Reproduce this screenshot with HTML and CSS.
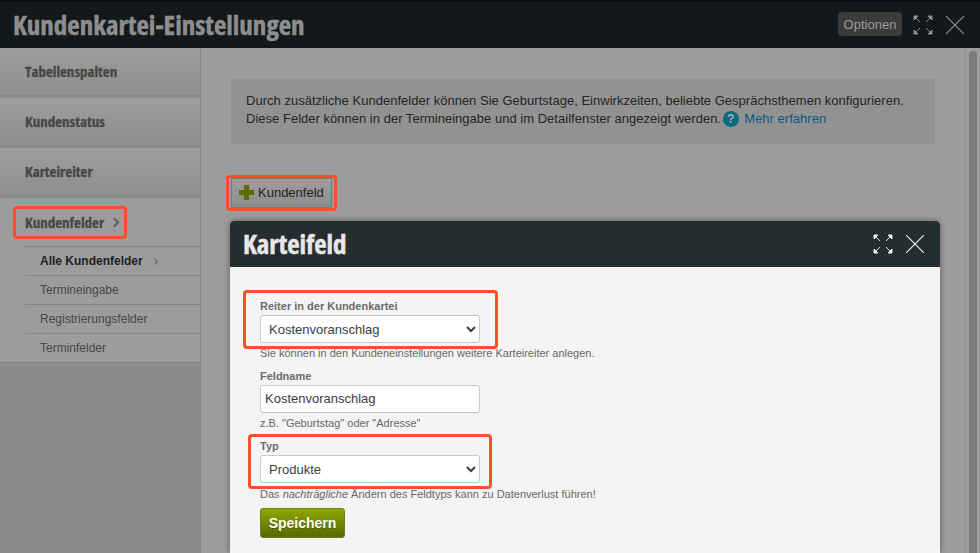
FILE: index.html
```html
<!DOCTYPE html>
<html lang="de">
<head>
    <meta charset="UTF-8">
    <title>Kundenkartei-Einstellungen</title>
    <link rel="stylesheet" href="styles.css">
</head>
<body>
    <div class="window">
        <header class="top-bar">
            <h1>Kundenkartei-Einstellungen</h1>
            <button class="options-btn">Optionen</button>
            <svg class="icon-expand" viewBox="0 0 20 20"><path d="M1 1h4L1 5zM3 3l4 4M19 1h-4l4 4zM17 3l-4 4M1 19h4l-4-4zM3 17l4-4M19 19h-4l4-4zM17 17l-4-4"/></svg>
            <svg class="icon-close" viewBox="0 0 18 18"><path d="M0 0l18 18M18 0L0 18"/></svg>
        </header>

        <div class="main">
            <nav class="sidebar">
                <div class="side-item">Tabellenspalten</div>
                <div class="side-item">Kundenstatus</div>
                <div class="side-item">Karteireiter</div>
                <div class="side-open">
                    <div class="side-title"><span class="mark mark-side">Kundenfelder <i class="chev"></i></span></div>
                    <ul class="sub-list">
                        <li class="active">Alle Kundenfelder <i class="chev small"></i></li>
                        <li>Termineingabe</li>
                        <li>Registrierungsfelder</li>
                        <li>Terminfelder</li>
                    </ul>
                </div>
            </nav>

            <section class="content">
                <div class="notice">
                    Durch zusätzliche Kundenfelder können Sie Geburtstage, Einwirkzeiten, beliebte Gesprächsthemen konfigurieren.<br>
                    Diese Felder können in der Termineingabe und im Detailfenster angezeigt werden.
                    <span class="help">?</span> <a href="#">Mehr erfahren</a>
                </div>

                <div class="mark mark-btn">
                    <button class="add-btn">
                        <svg class="plus" viewBox="0 0 15 15"><path d="M5 0h5v5h5v5h-5v5H5v-5H0V5h5z"/></svg>
                        Kundenfeld
                    </button>
                </div>

                <div class="dialog">
                    <div class="dialog-head">
                        <h2>Karteifeld</h2>
                        <svg class="icon-expand light" viewBox="0 0 20 20"><path d="M1 1h4L1 5zM3 3l4 4M19 1h-4l4 4zM17 3l-4 4M1 19h4l-4-4zM3 17l4-4M19 19h-4l4-4zM17 17l-4-4"/></svg>
                        <svg class="icon-close light" viewBox="0 0 18 18"><path d="M0 0l18 18M18 0L0 18"/></svg>
                    </div>
                    <div class="dialog-body">
                        <div class="mark mark-field">
                            <label>Reiter in der Kundenkartei</label>
                            <select class="field"><option>Kostenvoranschlag</option></select>
                        </div>
                        <p class="hint hint-under">Sie können in den Kundeneinstellungen weitere Karteireiter anlegen.</p>

                        <label class="plain">Feldname</label>
                        <input class="field field-text" type="text" value="Kostenvoranschlag">
                        <p class="hint">z.B. "Geburtstag" oder "Adresse"</p>

                        <div class="mark mark-type">
                            <label>Typ</label>
                            <select class="field"><option>Produkte</option></select>
                        </div>
                        <p class="hint hint-under">Das <em>nachträgliche</em> Ändern des Feldtyps kann zu Datenverlust führen!</p>

                        <button class="save-btn">Speichern</button>
                    </div>
                </div>
            </section>

            <div class="scroll-track"><div class="scroll-thumb"></div></div>
        </div>
    </div>
</body>
</html>
```

FILE: styles.css
```css
html, body {
    margin: 0;
    height: 100%;
    overflow: hidden;
}
body {
    font-family: "Liberation Sans", Arial, sans-serif;
    background: #9c9c9c;
    color: #222;
}
.window {
    height: 553px;
    display: flex;
    flex-direction: column;
}
.top-bar {
    height: 46px;
    background: #13191b;
    border-top: 2px solid #0a0d0e;
    display: flex;
    align-items: center;
    padding: 0 16px 0 13px;
    flex-shrink: 0;
}
.top-bar h1 {
    margin: 0 0 2px;
    flex: 1;
    font-family: "Open Sans", sans-serif;
    font-stretch: condensed;
    font-size: 27px;
    font-weight: 700;
    -webkit-text-stroke: 0.5px #8e8e8e;
    color: #8e8e8e;
}
.options-btn {
    font-family: "Liberation Sans", Arial, sans-serif;
    font-size: 13px;
    color: #9a9a9a;
    background: #3b3b3b;
    border: 0;
    border-radius: 4px;
    width: 64px;
    height: 24px;
    padding: 0;
    margin: 0 11px 2px 0;
}
.icon-expand, .icon-close {
    fill: none;
    stroke: #8f9394;
    stroke-width: 1.1;
    flex-shrink: 0;
}
.icon-expand {
    width: 20px;
    height: 20px;
    margin-right: 13px;
    fill: #8f9394;
    stroke-width: 0.9;
}
.icon-close {
    width: 18px;
    height: 18px;
}
.icon-expand.light, .icon-close.light {
    stroke: #f2f2f2;
}
.icon-expand.light {
    fill: #f2f2f2;
}
.main {
    flex: 1;
    display: flex;
    min-height: 0;
}
.sidebar {
    width: 200px;
    flex-shrink: 0;
    background: #8b8b8b;
    border-right: 1px solid #858585;
}
.side-item {
    height: 48px;
    line-height: 46px;
    padding-left: 25px;
    margin-bottom: 2px;
    font-family: "Open Sans", sans-serif;
    font-stretch: condensed;
    font-size: 15px;
    font-weight: 700;
    -webkit-text-stroke: 0.3px #474747;
    color: #474747;
    background: linear-gradient(#9d9d9d, #8e8e8e);
    border-bottom: 1px solid #858585;
    box-sizing: border-box;
}
.side-open {
    background: #9c9c9c;
    border-bottom: 1px solid #7f7f7f;
}
.side-title {
    height: 48px;
    display: flex;
    align-items: center;
    padding-left: 13px;
    font-family: "Open Sans", sans-serif;
    font-stretch: condensed;
    font-size: 15px;
    font-weight: 700;
    -webkit-text-stroke: 0.3px #474747;
    color: #474747;
}
.mark {
    border: 3px solid #fb4f2a;
    border-radius: 4px;
    box-sizing: border-box;
    position: relative;
}
.mark-side {
    width: 114px;
    height: 33px;
    display: flex;
    align-items: center;
    padding-left: 9px;
}
.chev {
    display: inline-block;
    width: 7px;
    height: 7px;
    margin-left: 7px;
    border-top: 2px solid #626262;
    border-right: 2px solid #626262;
    box-sizing: border-box;
    transform: rotate(45deg);
}
.chev.small {
    width: 5px;
    height: 5px;
    margin-left: 6px;
    border-width: 1px;
    vertical-align: 1px;
}
.sub-list {
    list-style: none;
    margin: 0 0 0 25px;
    padding: 0;
    font-size: 12px;
    color: #474747;
}
.sub-list li {
    height: 29px;
    line-height: 29px;
    padding-left: 15px;
    border-top: 1px solid #868686;
    box-sizing: border-box;
}
.sub-list li.active {
    font-weight: 700;
    color: #1f1f1f;
}
.content {
    flex: 1;
    display: flex;
    flex-direction: column;
    padding: 31px 0 0 30px;
    min-width: 0;
}
.notice {
    width: 704px;
    height: 65px;
    flex-shrink: 0;
    box-sizing: border-box;
    padding: 13px 15px 0;
    background: #929292;
    border-radius: 2px;
    font-size: 13px;
    line-height: 18px;
    letter-spacing: 0.015px;
    color: #252525;
}
.notice a {
    color: #0b5a85;
    text-decoration: none;
}
.help {
    display: inline-block;
    width: 16px;
    height: 16px;
    line-height: 16px;
    border-radius: 50%;
    background: #0a6a80;
    color: #a9a9a9;
    font-size: 12px;
    font-weight: 700;
    text-align: center;
    margin: 0 2px 0 -2px;
}
.mark-btn {
    width: 111px;
    height: 36px;
    flex-shrink: 0;
    margin: 31px 0 0 -5px;
    padding: 0 2px;
}
.add-btn {
    width: 100%;
    height: 100%;
    display: flex;
    align-items: center;
    gap: 4px;
    padding: 0 0 1px 7px;
    font-family: "Liberation Sans", Arial, sans-serif;
    font-size: 13px;
    color: #222;
    background: linear-gradient(#9e9e9e, #8c8c8c);
    border: 1px solid #777;
    border-radius: 1px;
}
.plus {
    width: 15px;
    height: 15px;
    fill: #5c6d00;
}
.dialog {
    width: 710px;
    flex: 1;
    min-height: 0;
    margin: 10px 0 0 -1px;
    box-shadow: 0 0 6px rgba(0, 0, 0, 0.4);
    border-radius: 4px 4px 0 0;
    background: #f4f4f4;
}
.dialog-head {
    height: 46px;
    background: #252d30;
    border-radius: 4px 4px 0 0;
    display: flex;
    align-items: center;
    padding: 0 16px 0 13px;
}
.dialog-head h2 {
    margin: 0 0 2px;
    flex: 1;
    font-family: "Open Sans", sans-serif;
    font-stretch: condensed;
    font-size: 27px;
    font-weight: 700;
    -webkit-text-stroke: 0.5px #e8e8e8;
    color: #e8e8e8;
}
.dialog-body {
    padding: 23px 0 0 30px;
}
.mark-field {
    width: 255px;
    height: 59px;
    margin-left: -17px;
    padding: 6px 0 0 14px;
}
.mark-type {
    width: 244px;
    height: 55px;
    margin: 4px 0 0 -12px;
    padding: 2px 0 0 9px;
}
label {
    display: block;
    font-size: 11px;
    font-weight: 700;
    color: #6b6b6b;
    line-height: 14px;
    margin-bottom: 2px;
}
.plain {
    margin: 9px 0 2px;
}
.field {
    display: block;
    width: 220px;
    height: 28px;
    box-sizing: border-box;
    font-family: "Liberation Sans", Arial, sans-serif;
    font-size: 13px;
    color: #3c3c3c;
    background: #fff;
    border: 1px solid #c9c9c9;
    border-radius: 3px;
    padding: 0 4px;
}
.field-text {
    padding-bottom: 2px;
}
.hint {
    margin: 3px 0 0;
    font-size: 11px;
    line-height: 14px;
    color: #666;
}
.hint-under {
    margin-top: -3px;
}
.mark-type + .hint-under {
    margin-top: -2px;
}
.save-btn {
    display: block;
    margin-top: 7px;
    width: 85px;
    height: 30px;
    padding: 0;
    font-family: "Liberation Sans", Arial, sans-serif;
    font-size: 14px;
    font-weight: 700;
    color: #fff;
    text-shadow: 0 1px 1px rgba(0, 0, 0, 0.3);
    background: linear-gradient(#8fa800, #566800);
    border: 1px solid #6d7f10;
    border-radius: 3px;
}
.scroll-track {
    width: 15px;
    box-sizing: border-box;
    padding: 3px 3px 0 3px;
    background: #9c9c9c;
    border-left: 1px solid #8e8e8e;
    flex-shrink: 0;
}
.scroll-thumb {
    height: 100%;
    background: #7b7b7b;
    border-radius: 4px 4px 0 0;
}
```
